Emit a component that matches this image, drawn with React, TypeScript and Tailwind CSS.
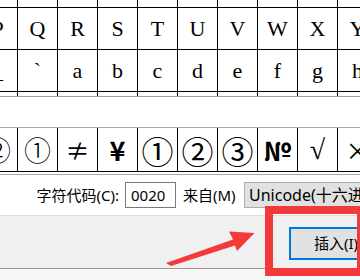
import React from "react";

const ROW0 = ["@", "A", "B", "C", "D", "E", "F", "G", "H", "I"];
const ROW1 = ["P", "Q", "R", "S", "T", "U", "V", "W", "X", "Y"];
const ROW2 = ["_", "`", "a", "b", "c", "d", "e", "f", "g", "h"];

function GridRow({ chars, hidden }: { chars: string[]; hidden?: boolean }) {
  return (
    <div className="flex">
      {chars.map((c, i) => (
        <div
          key={i}
          className="w-[40px] h-[42px] shrink-0 border-r border-b border-black flex items-center justify-center text-[22px] leading-none text-black"
          style={{ fontFamily: '"Liberation Serif", "DejaVu Serif", serif' }}
        >
          {hidden ? "" : c}
        </div>
      ))}
    </div>
  );
}

const CJK = '"Noto Sans CJK SC", "DejaVu Sans", sans-serif';
const SERIF = '"Liberation Serif", "DejaVu Serif", serif';

const RECENT: { c: string; cls: string; f: string }[] = [
  { c: "②", cls: "text-[27px] font-light", f: CJK },
  { c: "①", cls: "text-[27px] font-light", f: CJK },
  { c: "≠", cls: "text-[24px]", f: CJK },
  { c: "¥", cls: "text-[27px] font-semibold", f: CJK },
  { c: "①", cls: "text-[32px]", f: CJK },
  { c: "②", cls: "text-[32px]", f: CJK },
  { c: "③", cls: "text-[32px]", f: CJK },
  { c: "№", cls: "text-[26px] font-bold", f: CJK },
  { c: "√", cls: "text-[28px]", f: SERIF },
  { c: "×", cls: "text-[24px]", f: CJK },
];

export default function App() {
  const ui = { fontFamily: '"Noto Sans", "Noto Sans CJK SC", sans-serif' };
  return (
    <div className="relative w-[360px] h-[280px] overflow-hidden bg-white" style={ui}>
      {/* character grid */}
      <div className="h-[97px] overflow-hidden border-b border-[#a0a0a0]">
        <div className="ml-[-22px] mt-[-34px]">
          <GridRow chars={ROW0} hidden />
          <GridRow chars={ROW1} />
          <GridRow chars={ROW2} />
          <GridRow chars={ROW0} hidden />
        </div>
      </div>

      <div className="h-[30px]" />

      {/* recently used symbols */}
      <div className="border-t border-[#a8a8a8] border-b pb-[2px] overflow-hidden">
        <div className="flex ml-[-22px]">
          {RECENT.map((r, i) => (
            <div
              key={i}
              className={`w-[40px] h-[44px] shrink-0 border-r border-b border-black flex items-center justify-center leading-none text-black ${r.cls}`}
              style={{ fontFamily: r.f }}
            >
              {r.c}
            </div>
          ))}
        </div>
      </div>

      {/* character code row */}
      <div className="flex items-center pl-[34px] pt-[7px] pb-[7px] text-[15px] text-black whitespace-nowrap">
        <div className="w-[85px] shrink-0 text-right">字符代码(C):</div>
        <div className="ml-[6px] w-[51px] h-[26px] shrink-0 border border-[#7a7a7a] flex items-center pl-[5px]">
          0020
        </div>
        <div className="ml-[7px] w-[54px] shrink-0">来自(M)</div>
        <div className="ml-[7px] w-[150px] h-[26px] shrink-0 bg-[#e1e1e1] border border-[#adadad] flex items-center pl-[4px] text-[16px]">
          Unicode(十六进制)
        </div>
      </div>

      {/* button area */}
      <div className="h-[54px] border-t border-[#dcdcdc] border-b border-b-[#9a9a9a] bg-[#f0f0f0] flex pl-[289px] pt-[11px]">
        <div className="w-[94px] h-[33px] shrink-0 border-2 border-[#0078d7] bg-[#e1e1e1] flex items-center pl-[23px] text-[15px] text-black whitespace-nowrap">
          插入(I)
        </div>
      </div>
      <div className="h-[20px] bg-[#f7f7f7]" />

      {/* red annotation box */}
      <div className="absolute left-[265px] top-[206px] w-[100px] h-[70px] border-[8px] border-[#f23a3c]" />

      {/* red arrow */}
      <svg className="absolute left-0 top-0" width="360" height="280" viewBox="0 0 360 280">
        <polygon
          points="166,263 233,239.5 229,231.5 254.5,233 237,251 235,245.5 171,266"
          fill="#f23a3c"
        />
      </svg>
    </div>
  );
}
